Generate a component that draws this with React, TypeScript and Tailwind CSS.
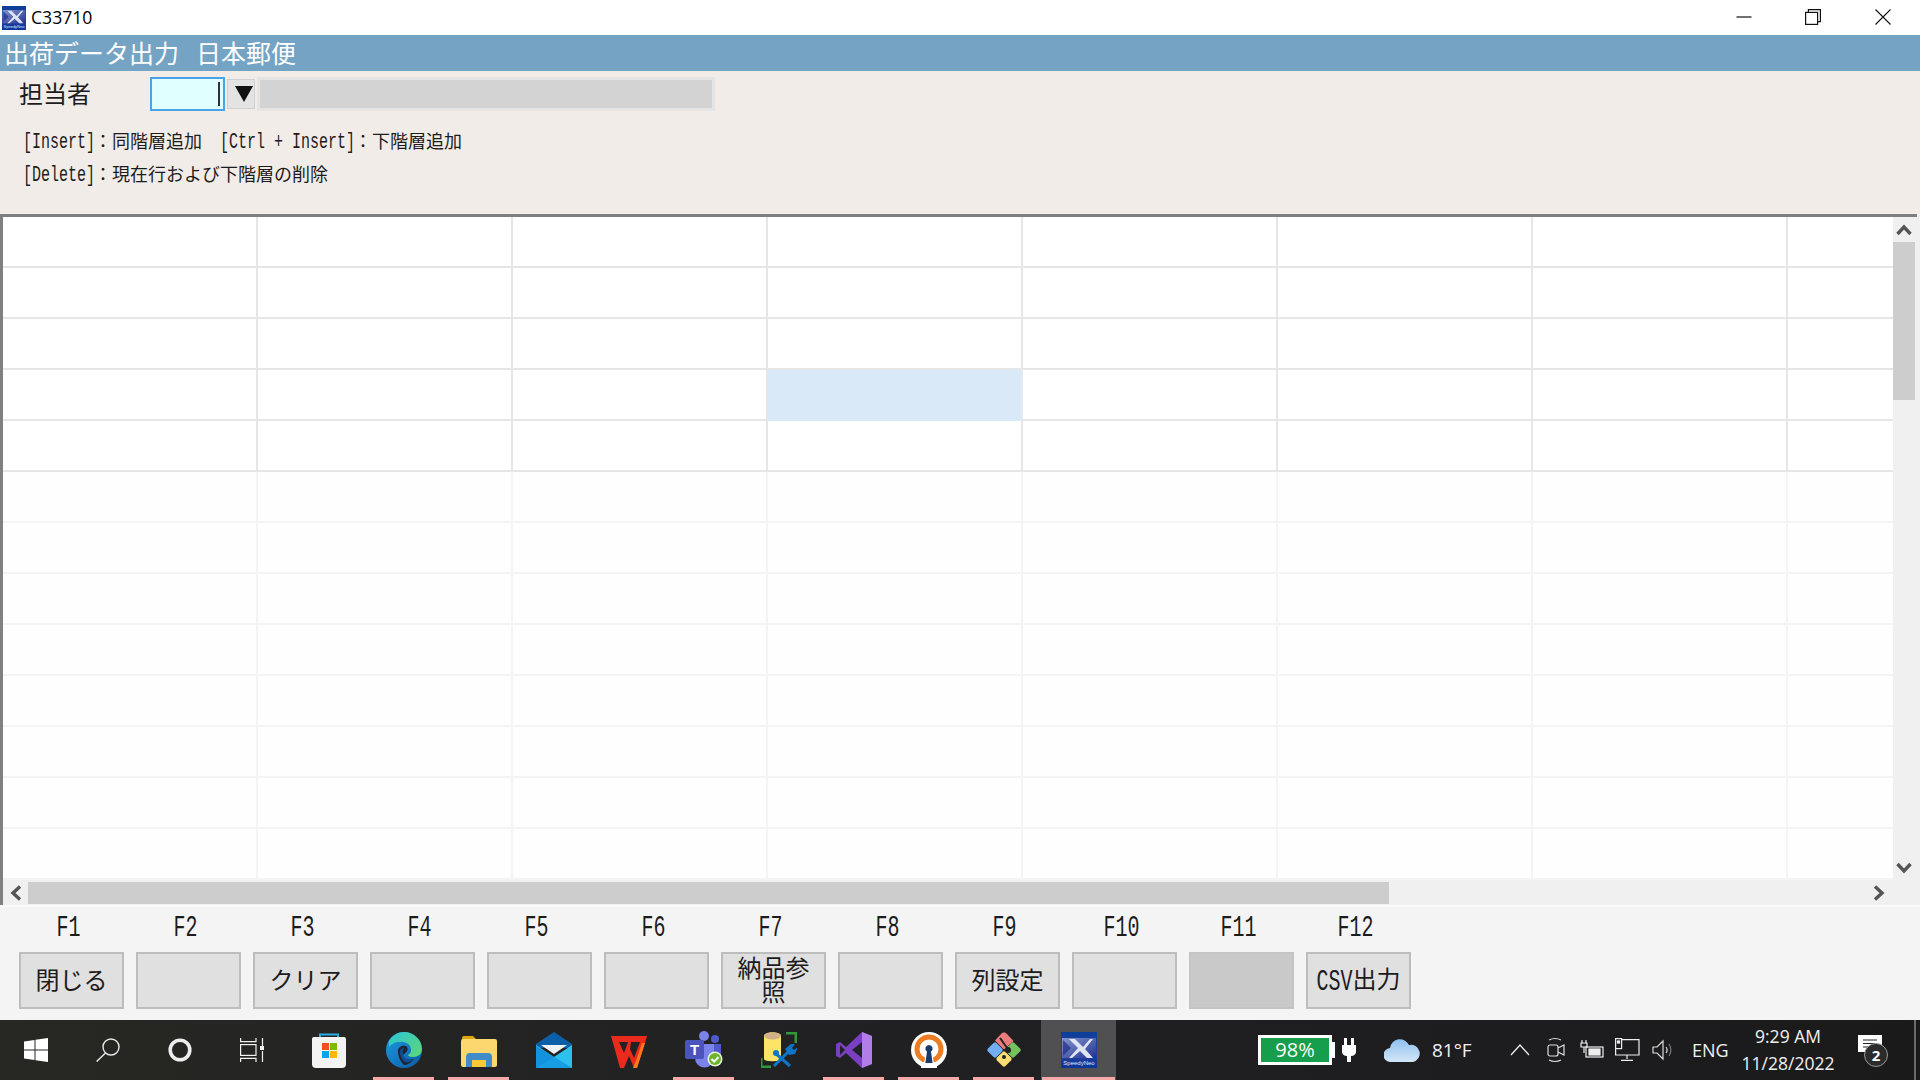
import React from "react";

const L = ({ children, className = "" }: { children: React.ReactNode; className?: string }) => (
  <span className={`inline-block whitespace-pre font-['Liberation_Mono',monospace] scale-y-[1.45] ${className}`}>{children}</span>
);

const J = ({ children }: { children: React.ReactNode }) => <span className="mb-[4px] -ml-[1px]">{children}</span>;

const Speedy = ({ size }: { size: number }) => (
  <svg width={size} height={size} viewBox="0 0 36 36">
    <defs>
      <linearGradient id={`sn${size}`} x1="0" y1="0" x2="0" y2="1">
        <stop offset="0" stopColor="#0b3f9a" />
        <stop offset="0.55" stopColor="#2a3f9c" />
        <stop offset="1" stopColor="#08379a" />
      </linearGradient>
      <linearGradient id={`sp${size}`} x1="0" y1="0" x2="1" y2="1">
        <stop offset="0" stopColor="#a9b4de" />
        <stop offset="1" stopColor="#1f2f8e" />
      </linearGradient>
    </defs>
    <rect width="36" height="36" fill={`url(#sn${size})`} />
    <rect x="1" y="6" width="34" height="20" fill={`url(#sp${size})`} opacity="0.75" />
    <path d="M8 7h6l8 8 7-8h3l-8 10 8 9h-6l-7-7-8 7H8l9-10z" fill="#dfe4f4" />
    <path d="M2 8l8 8-8 8z" fill="#1f2b85" opacity="0.7" />
    <text x="18" y="33" textAnchor="middle" fontSize="6" fill="#dfe7ff" fontFamily="Liberation Sans">SpeedyNeo</text>
  </svg>
);

const icons: Record<string, React.ReactNode> = {
  store: (
    <svg width="36" height="36" viewBox="0 0 36 36">
      <path d="M9 7V2.5h18V7" fill="none" stroke="#27aee8" strokeWidth="2" />
      <path d="M3 5h30a2 2 0 0 1 2 2l0 25a4 4 0 0 1-4 4H5a4 4 0 0 1-4-4V7a2 2 0 0 1 2-2z" fill="#f3f3f3" />
      <rect x="11" y="11" width="7" height="7" fill="#f25022" />
      <rect x="19" y="11" width="7" height="7" fill="#7fba00" />
      <rect x="11" y="19" width="7" height="7" fill="#00a4ef" />
      <rect x="19" y="19" width="7" height="7" fill="#ffb900" />
    </svg>
  ),
  edge: (
    <svg width="36" height="36" viewBox="0 0 36 36">
      <defs>
        <linearGradient id="e1" x1="0" y1="0" x2="1" y2="1">
          <stop offset="0" stopColor="#1b9de2" />
          <stop offset="1" stopColor="#0c59a4" />
        </linearGradient>
        <linearGradient id="e2" x1="0" y1="0" x2="1" y2="0.8">
          <stop offset="0" stopColor="#2cc5d8" />
          <stop offset="1" stopColor="#5ad67c" />
        </linearGradient>
      </defs>
      <circle cx="18" cy="18" r="18" fill="url(#e1)" />
      <path d="M3 9C7 3 12 0 18 0c10 0 18 8 18 17 0 6-5 8-9 8-3 0-5-1-5-2 2-1 3-3 3-5 0-5-5-9-11-8-5 0-9 2-11 5z" fill="url(#e2)" />
      <path d="M12 19c0-4 4-6 8-5 2 1 2 4 1 5-1 2-4 3-4 5 0 3 5 5 11 3-3 4-7 6-10 6-1-1-6-6-6-14z" fill="#1f2430" />
      <path d="M14 20c0-3 2-4 4-4-1 2-2 4-1 6 1 4 5 6 10 6-3 2-6 3-8 2-3-2-5-6-5-10z" fill="#0e4f9a" />
    </svg>
  ),
  explorer: (
    <svg width="36" height="36" viewBox="0 0 36 36">
      <path d="M1 6a2 2 0 0 1 2-2h9l4 4h-15z" fill="#dfa512" />
      <rect x="0" y="7" width="36" height="28" rx="2" fill="#fbd76d" />
      <path d="M5 35V25a4 4 0 0 1 4-4h18a4 4 0 0 1 4 4v10h-6v-7H11v7z" fill="#3f8cc9" />
      <rect x="11" y="28" width="14" height="7" fill="#fbc934" />
    </svg>
  ),
  mail: (
    <svg width="36" height="36" viewBox="0 0 36 36">
      <path d="M0 12L18 0l18 12v4H0z" fill="#0a5fa8" />
      <path d="M5 13h26L18 22z" fill="#eef2f5" />
      <path d="M0 13l18 12 18-12v23H0z" fill="#2cc0ef" />
      <path d="M0 36V14l36 22z" fill="#1392dd" />
      <path d="M0 36l18-11 18 11z" fill="#1aa2e5" opacity="0.7" />
    </svg>
  ),
  wps: (
    <svg width="36" height="36" viewBox="0 0 36 36">
      <path d="M0 4h36l-2 7-8 25h-3l-5-12-5 12H9L2 11z" fill="#ea2a1c" />
      <path d="M8 10h9l-4 11zM20 10h9l-6 16-4-9z" fill="#222225" />
      <path d="M22 36l3-7 6-18h3l-8 25z" fill="#ff7a18" />
    </svg>
  ),
  teams: (
    <svg width="38" height="38" viewBox="0 0 38 38">
      <circle cx="19" cy="5" r="5" fill="#7b83eb" />
      <circle cx="30" cy="8" r="4" fill="#5059c9" />
      <path d="M24 13h12v11c0 4-3 7-7 7h-5z" fill="#5059c9" />
      <path d="M10 13h19v14a9 9 0 0 1-19 0z" fill="#7b83eb" />
      <rect x="0" y="9" width="19" height="19" rx="2" fill="#4b53bc" />
      <text x="9.5" y="24" textAnchor="middle" fontSize="15" fontWeight="700" fill="#fff" fontFamily="Liberation Sans">T</text>
      <circle cx="30" cy="28" r="7.5" fill="#e9f4d9" />
      <circle cx="30" cy="28" r="6" fill="#6bb52b" />
      <path d="M26.5 28l2.6 2.6 4.4-4.6" stroke="#fff" strokeWidth="2" fill="none" />
    </svg>
  ),
  db: (
    <svg width="36" height="36" viewBox="0 0 36 36">
      <path d="M3 4c0-5 17-5 17 0v23c0 3-17 3-17 0z" fill="#fbe468" />
      <ellipse cx="11.5" cy="4" rx="8.5" ry="3.5" fill="#d2b08a" />
      <path d="M25 1h10v10M0 26v9h10" fill="none" stroke="#2f9a3c" strokeWidth="3" />
      <path d="M13 34l15-15M13 20l16 14" stroke="#0f75c9" strokeWidth="3" />
      <path d="M24 17l6-5 4 0-3 4 2 2 4-3-3 7-6 1z" fill="#0f75c9" />
      <circle cx="15" cy="21" r="3" fill="#0f75c9" />
    </svg>
  ),
  vs: (
    <svg width="36" height="36" viewBox="0 0 36 36">
      <path d="M26 0l10 4v28l-10 4L10 21l-6 5-4-2V12l4-2 6 5z" fill="#7a3fc2" />
      <path d="M26 0l10 4v28l-10 4z" fill="#b17de8" />
      <path d="M26 10L16 18l10 8z" fill="#222225" />
      <path d="M4 13v10l5-5z" fill="#222225" />
    </svg>
  ),
  vpn: (
    <svg width="36" height="36" viewBox="0 0 36 36">
      <circle cx="18" cy="18" r="18" fill="#fff" />
      <circle cx="18" cy="17" r="12" fill="none" stroke="#ed7d20" strokeWidth="5" />
      <path d="M10 30h16v6H10z" fill="#fff" />
      <path d="M18 10a5 5 0 0 1 3 9l2 13H13l2-13a5 5 0 0 1 3-9z" fill="#fff" />
      <path d="M18 13a3.6 3.6 0 0 1 2 6.6l1.6 11.4h-7.2L16 19.6A3.6 3.6 0 0 1 18 13z" fill="#17396b" />
    </svg>
  ),
  git: (
    <svg width="36" height="36" viewBox="0 0 36 36">
      <path d="M18 0.5a2 2 0 0 1 2 0.6l7.5 8-9.5 8.5-9-9 7-7.5a2 2 0 0 1 2-.6z" fill="#ee7b7b" />
      <rect x="3" y="12" width="12" height="12" rx="2" transform="rotate(45 9 18)" fill="#73aef5" />
      <rect x="21" y="12" width="12" height="12" rx="2" transform="rotate(45 27 18)" fill="#73c25c" />
      <rect x="12" y="21" width="12" height="12" rx="2" transform="rotate(45 18 27)" fill="#f7dd72" />
      <path d="M14 6l10 14" stroke="#222225" strokeWidth="2" />
      <circle cx="22" cy="18" r="3" fill="#222225" />
      <circle cx="18" cy="25" r="2" fill="#222225" />
    </svg>
  ),
};

const slots: { key: string; open?: boolean; active?: boolean }[] = [
  { key: "store" },
  { key: "edge", open: true },
  { key: "explorer", open: true },
  { key: "mail" },
  { key: "wps" },
  { key: "teams", open: true },
  { key: "db" },
  { key: "vs", open: true },
  { key: "vpn", open: true },
  { key: "git", open: true },
  { key: "speedy", open: true, active: true },
];

const fkeys: { f: string; body?: React.ReactNode; off?: boolean }[] = [
  { f: "F1", body: "閉じる" },
  { f: "F2" },
  { f: "F3", body: "クリア" },
  { f: "F4" },
  { f: "F5" },
  { f: "F6" },
  { f: "F7", body: <span className="block w-[72px] leading-[24px] text-center">納品参照</span> },
  { f: "F8" },
  { f: "F9", body: "列設定" },
  { f: "F10" },
  { f: "F11", off: true },
  { f: "F12", body: <span className="whitespace-nowrap"><L className="text-[20px]">CSV</L>出力</span> },
];

const rows = Array.from({ length: 13 }, (_, i) => i);
const cols = Array.from({ length: 8 }, (_, i) => i);

const Up = ({ r = 0 }: { r?: number }) => (
  <svg width="16" height="12" viewBox="0 0 16 12" style={{ transform: `rotate(${r}deg)` }}>
    <path d="M1.5 10L8 3l6.5 7" fill="none" stroke="#555" strokeWidth="3.4" />
  </svg>
);

export default function App() {
  return (
    <div className="w-[1920px] h-[1080px] flex flex-col overflow-hidden bg-white text-[#1c1c1c] font-['Noto_Sans_CJK_JP','Noto_Sans',sans-serif]">
      {/* title bar */}
      <div className="h-[35px] flex items-center bg-white shrink-0 pl-[2px] pr-[3px]">
        <Speedy size={24} />
        <span className="ml-[5px] text-[17.6px] text-black font-['Open_Sans',sans-serif]">C33710</span>
        <div className="ml-auto flex h-full pb-[2px]">
          <div className="w-[69px] flex items-center justify-center">
            <svg width="16" height="16" viewBox="0 0 16 16"><path d="M0.5 8h15" stroke="#111" strokeWidth="1.2" /></svg>
          </div>
          <div className="w-[69px] flex items-center justify-center">
            <svg width="16" height="16" viewBox="0 0 16 16" fill="none" stroke="#111" strokeWidth="1.2"><rect x="0.6" y="3.4" width="12" height="12" /><path d="M3.4 3.4V0.6h12v12h-2.8" /></svg>
          </div>
          <div className="w-[70px] pl-[2px] flex items-center justify-center">
            <svg width="16" height="16" viewBox="0 0 16 16" stroke="#111" strokeWidth="1.1"><path d="M0.5 0.5l15 15M15.5 0.5l-15 15" /></svg>
          </div>
        </div>
      </div>

      {/* heading band */}
      <div className="h-[36px] shrink-0 bg-[#74a3c4] flex items-center pl-[4px] pb-[2px] text-white text-[25px] leading-none whitespace-pre">
        <span>出荷データ出力</span>
        <span className="w-[17px]" />
        <span>日本郵便</span>
      </div>

      {/* form panel */}
      <div className="h-[142px] shrink-0 bg-[#f1ece8] pt-[6px]">
        <div className="flex items-center h-[34px]">
          <span className="ml-[19px] w-[131px] text-[24px] leading-none pb-[2px]">担当者</span>
          <div className="w-[75px] h-[34px] bg-[#e0ffff] border-2 border-[#4aa3e6] flex justify-end pr-[3px] items-center">
            <div className="w-[2px] h-[24px] bg-[#333]" />
          </div>
          <div className="ml-[2px] w-[28px] h-[30px] bg-[#e3e3e3] border border-[#d0d0d0] flex items-center justify-end pr-[1px]">
            <svg width="18" height="16" viewBox="0 0 18 16"><path d="M0 0h18L9 16z" fill="#111" /></svg>
          </div>
          <div className="ml-[2px] w-[458px] h-[34px] bg-[#d3d3d3] border-[3px] border-[#e4e4e4]" />
        </div>
        <div className="ml-[23px] mt-[19px] h-[24px] flex items-center text-[18px] leading-none whitespace-pre">
          <L className="text-[15px]">[Insert]</L>
          <J>：同階層追加</J>
          <span className="w-[18px]" />
          <L className="text-[15px]">[Ctrl + Insert]</L>
          <J>：下階層追加</J>
        </div>
        <div className="ml-[23px] mt-[9px] h-[24px] flex items-center text-[18px] leading-none whitespace-pre">
          <L className="text-[15px]">[Delete]</L>
          <J>：現在行および下階層の削除</J>
        </div>
      </div>

      {/* grid with scroll bars */}
      <div className="h-[692px] shrink-0 bg-[#f2f0ee] pt-[1px]">
        <div className="h-[691px] mr-[3px] border-l-[3px] border-t-[3px] border-l-[#808080] border-t-[#7f7f7f] flex flex-col bg-[#f0f0f0]">
          <div className="flex h-[663px]">
            <div className="w-[1890px] flex flex-col bg-white">
              {rows.map((r) => (
                <div key={r} className="flex h-[51px] shrink-0">
                  {cols.map((c) => {
                    const hot = r === 3 && c === 3;
                    const strong = r < 5;
                    const last = c === 7;
                    return (
                      <div
                        key={c}
                        className={`h-[51px] border-b-2 ${last ? "w-[105px]" : "w-[255px] border-r-2"} ${
                          hot ? "bg-[#d9e9f7] border-b-[#d9e9f7] border-r-[#e3e9ee]" : strong ? "bg-white border-[#e6e6e6]" : "bg-[#fefefe] border-[#f4f4f4]"
                        }`}
                      />
                    );
                  })}
                </div>
              ))}
            </div>
            <div className="w-[24px] flex flex-col bg-[#f0f0f0]">
              <div className="h-[25px] flex items-center justify-center pr-[2px]"><Up /></div>
              <div className="h-[158px] w-[22px] bg-[#cdcdcd]" />
              <div className="mt-auto h-[25px] flex items-center justify-center pr-[2px]"><Up r={180} /></div>
            </div>
          </div>
          <div className="h-[25px] flex items-center bg-[#f0f0f0]">
            <div className="w-[25px] flex justify-center"><Up r={-90} /></div>
            <div className="w-[1361px] h-[22px] bg-[#cdcdcd]" />
            <div className="ml-auto mr-[30px] flex justify-center"><Up r={90} /></div>
          </div>
        </div>
      </div>

      {/* function keys */}
      <div className="h-[115px] shrink-0 bg-[#f4f4f4] border-t-2 border-[#fafafa] pl-[19px] pt-[10px]">
        <div className="grid grid-cols-[repeat(12,117px)]">
          {fkeys.map((k) => (
            <div key={k.f} className="w-[105px] h-[24px] flex items-center justify-center pr-[6px]">
              <L className="text-[20px]">{k.f}</L>
            </div>
          ))}
        </div>
        <div className="grid grid-cols-[repeat(12,117px)] mt-[11px]">
          {fkeys.map((k) => (
            <div
              key={k.f}
              className={`w-[105px] h-[57px] border-2 border-[#bdbdbd] flex items-center justify-center text-[24px] leading-none pb-[3px] ${
                k.off ? "bg-[#c9c9c9] border-[#c4c4c4]" : "bg-[#e0e0e0]"
              }`}
            >
              {k.body}
            </div>
          ))}
        </div>
      </div>

      {/* task bar */}
      <div className="h-[60px] shrink-0 flex bg-linear-to-r from-[#272723] via-[#202023] to-[#1b1a1b] text-[#f0f0f0] font-['Open_Sans','Noto_Sans',sans-serif]">
        <div className="w-[72px] flex items-center justify-center">
          <svg width="24" height="24" viewBox="0 0 24 24" fill="#fff"><path d="M0 3.4L10.5 2v9.4H0zM11.5 1.8L24 0v11.4H11.5zM0 12.6h10.5V22L0 20.6zM11.5 12.6H24V24l-12.5-1.8z" /></svg>
        </div>
        <div className="w-[72px] flex items-center justify-center">
          <svg width="24" height="24" viewBox="0 0 24 24" fill="none" stroke="#e8e8e8" strokeWidth="1.4"><circle cx="15" cy="9" r="8" /><path d="M9.5 15L0.6 23.6" /></svg>
        </div>
        <div className="w-[72px] flex items-center justify-center">
          <svg width="24" height="24" viewBox="0 0 24 24" fill="none" stroke="#eee" strokeWidth="3.6"><circle cx="12" cy="12" r="9.8" /></svg>
        </div>
        <div className="w-[72px] flex items-center justify-center">
          <svg width="24" height="24" viewBox="0 0 24 24" fill="none" stroke="#f2f2f2" strokeWidth="1.2"><path d="M0.6 0v3.6h15.4V0M0.6 24v-3.6h15.4V24" /><rect x="0.6" y="6.6" width="15.4" height="10.8" /><path d="M22.5 0v8M22.5 13v11" /><rect x="20" y="8" width="5" height="4" fill="#f2f2f2" stroke="none" /></svg>
        </div>
        <div className="ml-[3px] flex">
          {slots.map((s) => (
            <div
              key={s.key}
              className={`w-[75px] h-[60px] flex flex-col items-center relative ${s.active ? "bg-[#505052]" : ""}`}
            >
              <div className="h-[60px] flex items-center justify-center">
                {s.key === "speedy" ? <Speedy size={36} /> : icons[s.key]}
              </div>
              {s.open && (
                <div className={`absolute bottom-0 h-[3px] bg-[#f7a9a9] ${s.active ? "w-[73px]" : "w-[61px]"}`} />
              )}
            </div>
          ))}
        </div>

        <div className="ml-auto flex items-center w-[662px]">
          <div className="w-[77px] flex items-center">
            <div className="w-[74px] h-[30px] border-[3px] border-white bg-[#169e4c] flex items-center justify-center text-white text-[20px] leading-none">98%</div>
            <div className="w-[3px] h-[16px] bg-white" />
          </div>
          <div className="w-[28px] flex justify-center">
            <svg width="14" height="24" viewBox="0 0 14 24" fill="#fff"><path d="M2 0h3v7h4V0h3v7h2v7c0 2-2 4-5 4v6H5v-6c-3 0-5-2-5-4V7h2z" /></svg>
          </div>
          <div className="ml-[21px] w-[36px]">
            <svg width="36" height="24" viewBox="0 0 36 24"><defs><linearGradient id="cl" x1="0" y1="0" x2="0" y2="1"><stop offset="0" stopColor="#8fc0ee" /><stop offset="1" stopColor="#d4e6f8" /></linearGradient></defs><path d="M7 24a7 7 0 0 1-1-14 10 10 0 0 1 19-3 8 8 0 0 1 4 17z" fill="url(#cl)" /></svg>
          </div>
          <span className="ml-[12px] w-[40px] text-[19px] leading-none whitespace-nowrap">81°F</span>
          <div className="ml-[30px] w-[36px] flex justify-center">
            <svg width="20" height="12" viewBox="0 0 20 12" fill="none" stroke="#eee" strokeWidth="1.3"><path d="M1 11l9-10 9 10" /></svg>
          </div>
          <div className="w-[36px] flex justify-center">
            <svg width="18" height="26" viewBox="0 0 18 26" fill="none" stroke="#ddd" strokeWidth="1.2"><path d="M2 3c4-2 8-2 12 0M2 23c4 2 8 2 12 0" /><rect x="1" y="8" width="10" height="11" rx="2" /><path d="M11 11l6-3v10l-6-3" /></svg>
          </div>
          <div className="w-[35px] flex justify-center">
            <svg width="24" height="20" viewBox="0 0 24 20" fill="none" stroke="#eee" strokeWidth="1.2"><path d="M2 0v3M6 0v3M1 3h6v4H1zM4 7v6" /><rect x="6" y="7" width="17" height="10" /><rect x="9" y="9" width="11" height="6" fill="#eee" /></svg>
          </div>
          <div className="w-[37px] flex justify-center">
            <svg width="25" height="24" viewBox="0 0 25 24" fill="none" stroke="#eee" strokeWidth="1.2"><rect x="0.6" y="0.6" width="6" height="10" /><path d="M6.6 1.6H24V17H0.6V10.6M12 17v4M6 22.4h12" /><rect x="2.5" y="3" width="2" height="2" fill="#eee" /></svg>
          </div>
          <div className="w-[34px] flex justify-center">
            <svg width="22" height="22" viewBox="0 0 22 22" fill="none" stroke="#ddd" strokeWidth="1.2"><path d="M1 8h4l6-6v18l-6-6H1zM14 8c1.5 2 1.5 4 0 6" /><path d="M17 5c2.5 4 2.5 8 0 12" stroke="#777" /></svg>
          </div>
          <span className="ml-[12px] w-[34px] text-[18px] leading-none font-['Open_Sans',sans-serif]">ENG</span>
          <div className="ml-[6px] w-[112px] h-full flex flex-col items-center justify-center text-[17.5px] leading-[27px] whitespace-nowrap">
            <span>9:29 AM</span>
            <span>11/28/2022</span>
          </div>
          <div className="w-[52px] flex justify-center">
            <div className="relative w-[24px] h-[30px]">
              <svg width="24" height="26" viewBox="0 0 24 26"><path d="M0 0h24v17H12l-5 7v-7H0z" fill="#fff" /><path d="M5 5h14M5 8.5h14M5 12h10" stroke="#222" strokeWidth="1.2" /></svg>
              <span className="absolute left-[6px] top-[8px] w-[24px] h-[24px] rounded-full bg-[#2b2b2b] border border-[#999] text-white text-[15px] font-bold leading-[22px] text-center">2</span>
            </div>
          </div>
          <div className="ml-[18px] w-[2px] h-full bg-[#6a6a6a]" />
        </div>
      </div>
    </div>
  );
}
